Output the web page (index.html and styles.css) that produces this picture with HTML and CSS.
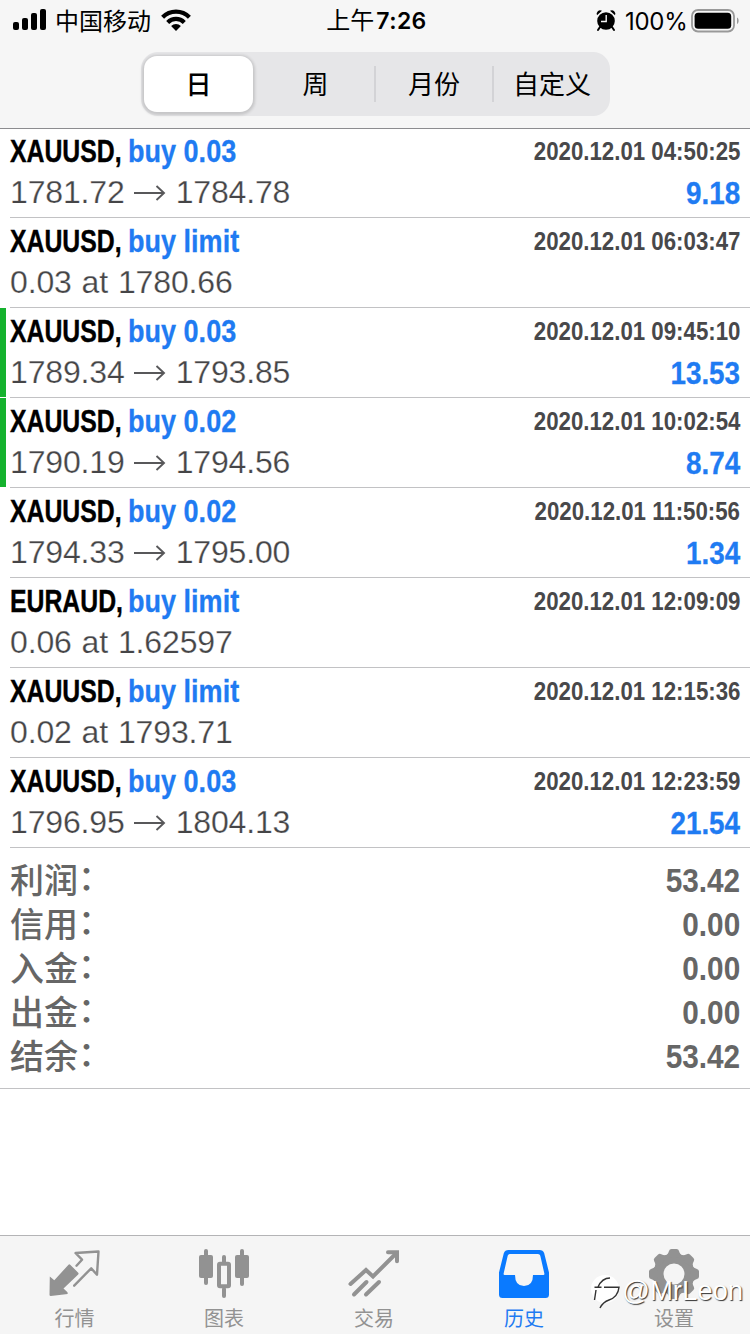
FILE: index.html
```html
<!DOCTYPE html>
<html lang="zh-CN">
<head>
<meta charset="utf-8">
<title>历史</title>
<link rel="stylesheet" href="styles.css">
</head>
<body>
<div class="app">
  <header class="top">
    <div class="status">
      <div class="status-left">
        <svg class="signal" width="34" height="22" viewBox="0 0 34 22"><rect x="0" y="13" width="6" height="8" rx="2"/><rect x="9" y="9" width="6" height="12" rx="2"/><rect x="18" y="4" width="6" height="17" rx="2"/><rect x="27" y="0" width="6" height="21" rx="2"/></svg>
        <span class="carrier">中国移动</span>
        <svg class="wifi" width="30" height="22" viewBox="0 0 30 22"><g fill="none" stroke="#000" stroke-width="4.2"><path d="M1.6 8.2a19 19 0 0 1 26.8 0"/><path d="M6.700 13.400a11.700 11.700 0 0 1 16.600 0"/></g><path d="M15 22l-4.900-4.900a7 7 0 0 1 9.800 0z"/></svg>
      </div>
      <div class="clock"><span class="ampm">上午</span><span>7:26</span></div>
      <div class="status-right">
        <svg width="20" height="21" viewBox="0 0 20 21"><circle cx="10" cy="11" r="8.800"/><path d="M1 5.300A3.500 3.500 0 0 1 6 .8zM19 5.300A3.500 3.500 0 0 0 14 .8z"/><path d="M4 17l-2 3M16 17l2 3" stroke="#000" stroke-width="2" stroke-linecap="round"/><path d="M10.200 5v6.500H5" fill="none" stroke="#f6f6f6" stroke-width="1.400"/></svg>
        <span class="percent">100%</span>
        <svg width="49" height="24" viewBox="0 0 49 24"><rect x="1" y="1" width="42" height="21.500" rx="6" fill="none" stroke="#999" stroke-width="1.800"/><rect x="3.600" y="3.800" width="36.600" height="16" rx="3.600"/><path d="M46 8.500c2.200 1 2.200 5.500 0 6.500z" fill="#999"/></svg>
      </div>
    </div>
    <nav class="segments">
      <span class="segment selected">日</span>
      <span class="segment">周</span>
      <span class="segment divided">月份</span>
      <span class="segment divided">自定义</span>
    </nav>
  </header>

  <main class="history" id="history"></main>

  <section class="summary">
    <div class="total"><span>利润<i>：</i></span><b>53.42</b></div>
    <div class="total"><span>信用<i>：</i></span><b>0.00</b></div>
    <div class="total"><span>入金<i>：</i></span><b>0.00</b></div>
    <div class="total"><span>出金<i>：</i></span><b>0.00</b></div>
    <div class="total"><span>结余<i>：</i></span><b>53.42</b></div>
  </section>

  <footer class="tabs">
    <div class="tab">
      <svg width="52" height="50" viewBox="0 0 52 50"><path d="M19.500 14.700q.8-.8 1.700 0l8 8q.8.900 0 1.700L14.500 38.500l4 3.700.2 1.800L1.800 46Q.5 46 .5 44.700L.8 26.500l4.500 3.800z" fill="#929292"/><path d="M27.500 15.700l5.500-6-6.500-6.700L49.500 1.500l-1.500 23.200-5.800-6.400-17 17.400" fill="none" stroke="#929292" stroke-width="2.400" stroke-linejoin="round" stroke-linecap="round"/></svg>
      <span>行情</span>
    </div>
    <div class="tab">
      <svg width="52" height="50" viewBox="0 0 52 50"><g fill="#929292"><rect x="1" y="5" width="14" height="23" rx="2"/><rect x="6" y="-1" width="4" height="36" rx="2"/><rect x="37" y="5" width="14" height="23" rx="2"/><rect x="42" y="-1" width="4" height="37" rx="2"/><rect x="24" y="5" width="4" height="9" rx="2"/><rect x="24" y="37" width="4" height="11" rx="2"/></g><rect x="21" y="13.800" width="10" height="22.400" rx="1" fill="none" stroke="#929292" stroke-width="4"/></svg>
      <span>图表</span>
    </div>
    <div class="tab">
      <svg width="52" height="50" viewBox="0 0 52 50"><g fill="none" stroke="#929292" stroke-width="4" stroke-linecap="round"><path d="M2.500 34L18 20l7 6.500L48 3.500"/><path d="M40 2.200h9v9" stroke-width="4"/><path d="M6 44.500L18.500 32M18 44.500L31 32"/></g></svg>
      <span>交易</span>
    </div>
    <div class="tab active">
      <svg width="52" height="50" viewBox="0 0 52 50"><path d="M10.500 0h31q3.500 0 4.700 3.200L51 22.500V44.500q0 3.500-3.500 3.500h-43Q1 48 1 44.500V22.500L5.800 3.200Q7 0 10.500 0zM12 4q-1.800 0-2.300 1.800L5.600 23.700q-.2 1.200 1 1.200H17q0 11 9 11t9-11h10.400q1.200 0 1-1.200L42.300 5.800Q41.800 4 40 4z" fill="#0a7aff" fill-rule="evenodd"/></svg>
      <span>历史</span>
    </div>
    <div class="tab">
      <svg width="52" height="50" viewBox="0 0 52 50"><circle cx="26" cy="24" r="15.500" fill="none" stroke="#929292" stroke-width="10"/><path id="cog" d="M16.500 6Q20 5 21 1Q21.500-1 23.500-1h5Q30.500-1 31 1Q32 5 35.500 6L26 8z" fill="#929292"/><g fill="#929292"><use href="#cog" transform="rotate(45 26 24)"/><use href="#cog" transform="rotate(90 26 24)"/><use href="#cog" transform="rotate(135 26 24)"/><use href="#cog" transform="rotate(180 26 24)"/><use href="#cog" transform="rotate(225 26 24)"/><use href="#cog" transform="rotate(270 26 24)"/><use href="#cog" transform="rotate(315 26 24)"/></g></svg>
      <span>设置</span>
    </div>
    <div class="watermark">
      <svg width="30" height="34" viewBox="0 0 30 34"><circle cx="14" cy="15" r="14" fill="#fff"/><path d="M19 4Q11 4 7 13M3.500 13.300h7M13 13.300h15Q27 23 18 26Q12 28 9 34M5 16L3.500 26" fill="none" stroke="#333" stroke-width="1.400"/></svg>
      <span>@MrLeon</span>
    </div>
  </footer>
</div>
<script src="history.js"></script>
</body>
</html>
```
FILE: styles.css
```css
* { box-sizing: border-box; }
body { margin: 0; background: #fff; }
.app {
  width: 750px; height: 1334px; overflow: hidden;
  display: flex; flex-direction: column;
  font-family: "Liberation Sans", "Noto Sans CJK SC", sans-serif;
  color: #000;
}
svg { display: block; overflow: visible; flex: none; }

.top {
  flex: none; height: 129px; background: #f6f6f6;
  border-bottom: 1px solid #8c8c8f;
}
.status {
  height: 40px; padding: 0 10px 0 13px;
  display: grid; grid-template-columns: 1fr auto 1fr; align-items: center;
  font-family: Inter, "Noto Sans CJK SC", sans-serif; font-size: 24px;
  white-space: nowrap;
}
.status-left, .status-right { display: flex; align-items: center; }
.status-left { padding-bottom: 2px; }
.status-right { justify-content: flex-end; gap: 5px; padding-bottom: 1px; }
.signal { margin-right: 8px; }
.carrier { font-family: "Noto Sans CJK SC", sans-serif; line-height: 40px; }
.wifi { margin-left: 10px; }
.clock { display: flex; align-items: center; gap: 2px; font-weight: 600; line-height: 40px; font-size: 23px; letter-spacing: .4px; }
.ampm { font-weight: 400; font-size: 24px; letter-spacing: 0; }
.percent { width: 61px; margin-left: 4px; padding-top: 1px; letter-spacing: -.3px; }

.segments {
  width: 469px; height: 64px; margin: 12px 0 0 141px; padding: 4px 0 4px 3px;
  border-radius: 17px; background: #e6e6e8;
  display: grid; grid-template-columns: 109px 121px 118px 118px; align-items: center;
}
.segment {
  height: 56px; display: flex; align-items: center; justify-content: center;
  padding-bottom: 2px;
  font: 400 26px/54px "Noto Sans CJK SC", sans-serif;
}
.segment:nth-child(2) { padding-left: 4px; }
.selected {
  background: #fff; border-radius: 13px; font-weight: 500;
  box-shadow: 0 1px 3px 2px rgba(0, 0, 0, .14);
}
.divided { height: 36px; border-left: 2px solid #d3d3d6; }

.history { flex: none; margin-top: -1px; }
.deal {
  height: 90px; padding: 3px 10px 0; position: relative;
  background: linear-gradient(#c2c2c4, #c2c2c4) 10px 89px / 740px 1px no-repeat;
}
.tagged::before {
  content: ""; position: absolute; left: 0; top: 0; width: 6px; height: 89px;
  background: #15b22e;
}
.line { height: 41px; display: flex; justify-content: space-between; align-items: center; white-space: nowrap; }
.title { display: flex; font-weight: 700; font-size: 32px; line-height: 41px; }
.symbol { width: 118px; transform: scaleX(.775); transform-origin: left; -webkit-text-stroke: .4px #000; }
.kind { color: #1f7bf2; transform: scaleX(.845); transform-origin: left; -webkit-text-stroke: .3px #1f7bf2; }
.time {
  font-weight: 700; font-size: 26px; color: #48484a;
  transform: scaleX(.856); transform-origin: right;
}
.prices {
  display: flex; align-items: center; font-size: 32px; line-height: 41px;
  letter-spacing: -.15px; word-spacing: 1.2px; color: #454547; -webkit-text-stroke: .25px #fff;
}
.arrow { margin: 0 10px 0 9px; }
.profit {
  font-weight: 700; font-size: 32px; color: #1f7bf2; padding-top: 2px;
  transform: scaleX(.87); transform-origin: right; -webkit-text-stroke: .3px #1f7bf2;
}

.summary { flex: none; height: 241px; padding: 10px 10px 0; border-bottom: 1px solid #c2c2c4; color: #666; }
.total { height: 44px; display: flex; align-items: center; justify-content: space-between; }
.total span { padding-bottom: 2px; font: 500 34px/42px "Noto Sans CJK SC", sans-serif; }
.total i { display: inline-block; font-style: normal; transform: translate(0, -3px); }
.total b { font-size: 34px; line-height: 44px; transform: scaleX(.875); transform-origin: right; }

.tabs {
  flex: none; height: 99px; margin-top: auto; position: relative;
  background: #f5f5f5; border-top: 1px solid #b4b4b6;
  display: grid; grid-template-columns: 149px repeat(4, 150px);
}
.tab {
  padding-top: 14px; display: flex; flex-direction: column; align-items: center;
  font: 400 20px/28px "Noto Sans CJK SC", sans-serif; color: #929292;
}
.tab span { margin-top: 4px; }
.active { color: #1f7bf2; }
.watermark {
  position: absolute; left: 591px; top: 38px; display: flex; align-items: center; gap: 1px;
  font: 400 27.500px/34px "Liberation Sans", sans-serif; color: #fff;
  text-shadow: 1px 1px 1px #333;
}
```
FILE: history.js
```js
const deals = [
  ["XAUUSD,", "buy 0.03", "2020.12.01 04:50:25", "1781.72", "1784.78", "9.18"],
  ["XAUUSD,", "buy limit", "2020.12.01 06:03:47", "0.03 at 1780.66"],
  ["XAUUSD,", "buy 0.03", "2020.12.01 09:45:10", "1789.34", "1793.85", "13.53", true],
  ["XAUUSD,", "buy 0.02", "2020.12.01 10:02:54", "1790.19", "1794.56", "8.74", true],
  ["XAUUSD,", "buy 0.02", "2020.12.01 11:50:56", "1794.33", "1795.00", "1.34"],
  ["EURAUD,", "buy limit", "2020.12.01 12:09:09", "0.06 at 1.62597"],
  ["XAUUSD,", "buy limit", "2020.12.01 12:15:36", "0.02 at 1793.71"],
  ["XAUUSD,", "buy 0.03", "2020.12.01 12:23:59", "1796.95", "1804.13", "21.54"]
];
const arrow = '<svg class="arrow" width="32" height="16" viewBox="0 0 32 16"><path d="M0 8h30M22.500 1L30 8L22.500 15" fill="none" stroke="#58585a" stroke-width="1.900"/></svg>';
document.getElementById("history").innerHTML = deals.map(([symbol, kind, time, from, to, profit, tagged]) => `
  <article class="deal${tagged ? " tagged" : ""}">
    <div class="line"><div class="title"><span class="symbol">${symbol}</span><span class="kind">${kind}</span></div><span class="time">${time}</span></div>
    <div class="line"><div class="prices"><span>${from}</span>${to ? arrow + `<span>${to}</span>` : ""}</div>${profit ? `<span class="profit">${profit}</span>` : ""}</div>
  </article>`).join("");
```
